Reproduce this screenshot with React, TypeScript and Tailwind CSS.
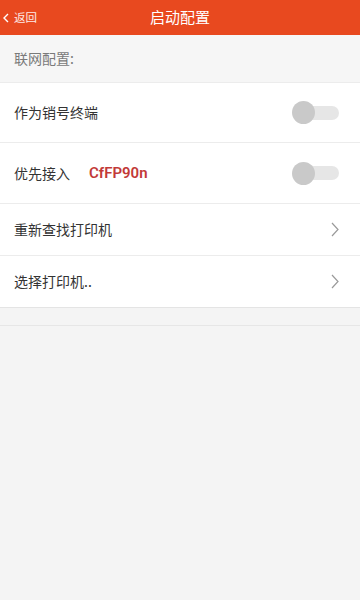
import React from 'react';

const font = { fontFamily: '"Noto Sans CJK SC", "Noto Sans", sans-serif' };

const Toggle: React.FC = () => (
  <div className="relative w-[47px] h-[23px] flex items-center">
    <div className="ml-[6px] w-[41px] h-[14px] rounded-full bg-[#e6e6e6]" />
    <div className="absolute left-0 top-0 w-[23px] h-[23px] rounded-full bg-[#c9c9c9]" />
  </div>
);

const Chevron: React.FC = () => (
  <svg width="8" height="15" viewBox="0 0 8 15" fill="none">
    <path d="M1 1l6 6.5-6 6.5" stroke="#9a9a9a" strokeWidth="1.2" />
  </svg>
);

export default function App() {
  return (
    <div className="w-[360px] h-[600px] bg-[#f4f4f4] flex flex-col" style={font}>
      {/* Header */}
      <div className="h-[35px] bg-[#e8491f] flex items-center relative shrink-0">
        <div className="absolute left-[3px] flex items-center gap-[5px] text-white/90">
          <svg width="6" height="10" viewBox="0 0 6 10" fill="none">
            <path d="M5 1L1 5l4 4" stroke="white" strokeWidth="1.4" />
          </svg>
          <span className="text-[11.5px]">返回</span>
        </div>
        <div className="w-full text-center text-white text-[15px]">启动配置</div>
      </div>

      {/* Section label */}
      <div className="h-[48px] flex items-center px-[14px] bg-[#f6f6f6] border-b border-[#ececec]">
        <span className="text-[14px] text-[#7a7a7a]">联网配置:</span>
      </div>

      <div className="bg-white">
        <div className="h-[60px] flex items-center justify-between pl-[14px] pr-[21px] border-b border-[#ececec]">
          <span className="text-[14px] text-[#333]">作为销号终端</span>
          <Toggle />
        </div>
        <div className="h-[61px] flex items-center justify-between pl-[14px] pr-[21px] border-b border-[#ececec]">
          <div className="flex items-center">
            <span className="text-[14px] text-[#333]">优先接入</span>
            <span className="ml-[19px] text-[15px] font-semibold text-[#c23a38]" style={{ fontFamily: 'Roboto, sans-serif' }}>CfFP90n</span>
          </div>
          <Toggle />
        </div>
        <div className="h-[52px] flex items-center justify-between pl-[14px] pr-[21px] border-b border-[#ececec]">
          <span className="text-[14px] text-[#333]">重新查找打印机</span>
          <Chevron />
        </div>
        <div className="h-[52px] flex items-center justify-between pl-[14px] pr-[21px] border-b border-[#e4e4e4]">
          <span className="text-[14px] text-[#333]">选择打印机..</span>
          <Chevron />
        </div>
      </div>

      <div className="h-[18px] bg-[#f4f4f4] border-b border-[#e6e6e6]" />
      <div className="flex-1 bg-[#f4f4f4]" />
    </div>
  );
}
